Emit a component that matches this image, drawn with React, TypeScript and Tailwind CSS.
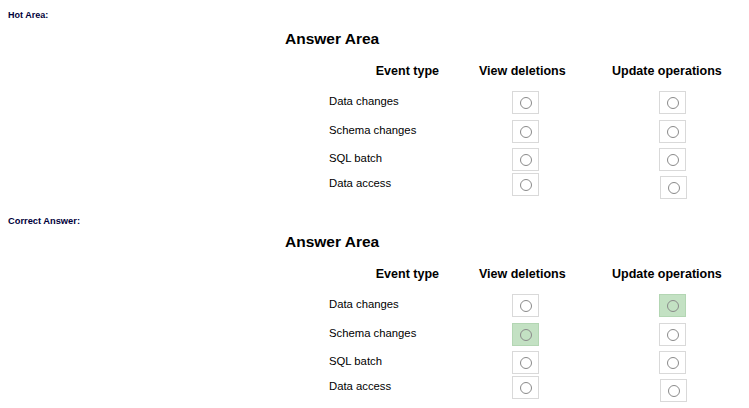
const rows = [
  { label: "Data changes", h: "h-[29px]" },
  { label: "Schema changes", h: "h-[28px]" },
  { label: "SQL batch", h: "h-[25px]" },
  { label: "Data access", h: "h-[27px]" },
];

function Radio({ checked, last }: { checked?: boolean; last?: boolean }) {
  return (
    <div
      className={
        "flex h-[23px] w-[27px] items-center justify-center border " +
        (checked ? "border-[#b3d6b3] bg-[#c3e1c3]" : "border-[#d9d9d9] bg-white") +
        (last ? " mt-[3px]" : "")
      }
    >
      <span className="block h-[12px] w-[12px] rounded-full border border-[#8a8a8a]" />
    </div>
  );
}

function AnswerArea({ answers }: { answers?: [number, number] }) {
  return (
    <div className="pl-[285px]">
      <h2 className="text-[15.5px] font-bold leading-[18px] text-black">Answer Area</h2>
      <div className="mt-[15px] grid grid-cols-[184px_110px_170px] text-black">
        <div className="h-[28px] pr-[30px] text-right text-[12.5px] font-bold leading-[16px]">Event type</div>
        <div className="h-[28px] pl-[10px] text-[12.5px] font-bold leading-[16px]">View deletions</div>
        <div className="h-[28px] pl-[33px] text-[12.5px] font-bold leading-[16px]">Update operations</div>
        {rows.map((row, i) => (
          <div key={row.label} className="contents">
            <div className={row.h + " pl-[44px] pt-[3px] text-[11.3px] leading-[14px]"}>{row.label}</div>
            <div className={row.h + " pl-[43px]"}>
              <Radio checked={answers?.[0] === i} />
            </div>
            <div className={row.h + (i === 3 ? " pl-[81px]" : " pl-[80px]")}>
              <Radio checked={answers?.[1] === i} last={i === 3} />
            </div>
          </div>
        ))}
      </div>
    </div>
  );
}

export default function App() {
  return (
    <div className="h-[408px] w-[749px] overflow-hidden bg-white font-['Liberation_Sans',Arial,sans-serif]">
      <p className="pl-[8px] pt-[10px] text-[9px] font-bold leading-[10px] text-[#00003a]">Hot Area:</p>
      <div className="mt-[10px]">
        <AnswerArea />
      </div>
      <p className="mt-[16px] pl-[8px] text-[9.3px] font-bold leading-[10px] text-[#00003a]">Correct Answer:</p>
      <div className="mt-[7px]">
        <AnswerArea answers={[1, 0]} />
      </div>
    </div>
  );
}
